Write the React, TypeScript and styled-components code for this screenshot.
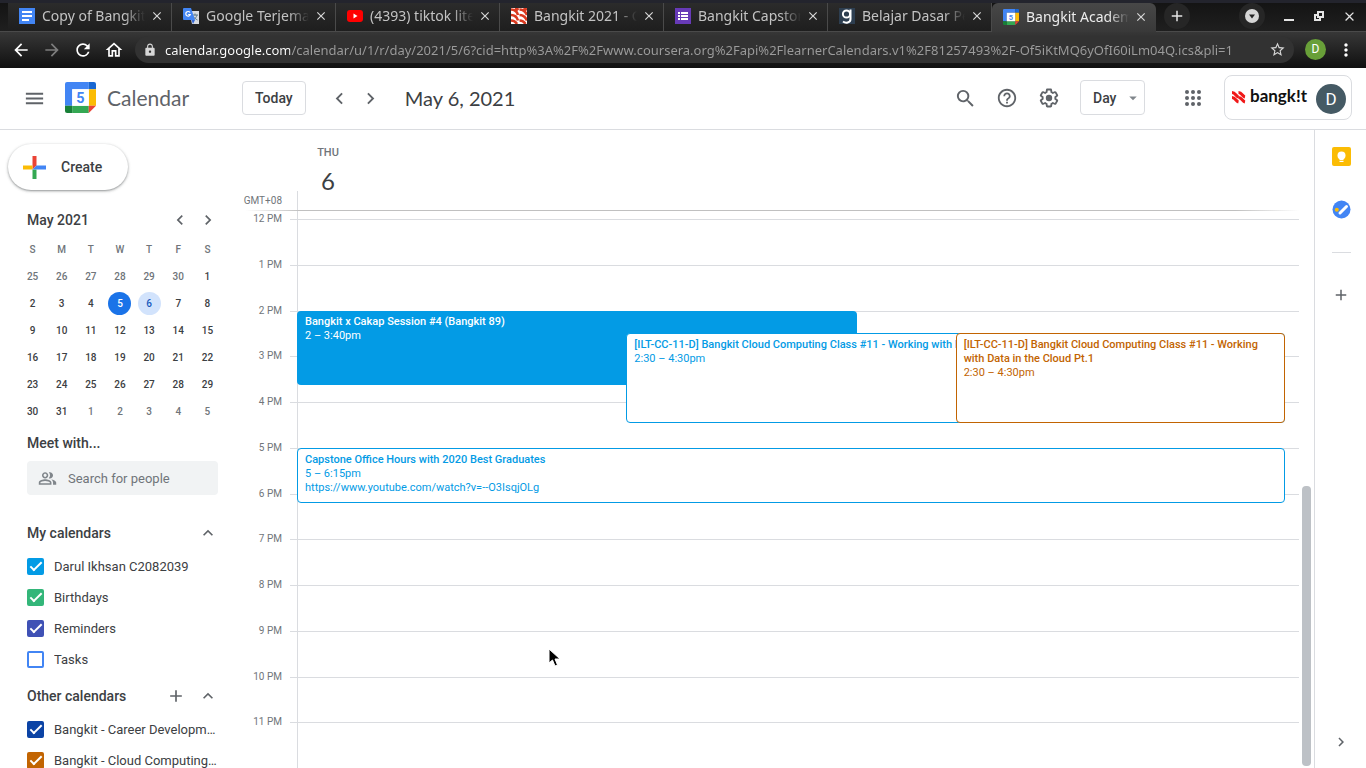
import React from 'react';
import styled, { createGlobalStyle, css } from 'styled-components';
import {
  MdAdd,
  MdArrowBack,
  MdArrowForward,
  MdArrowDropDown,
  MdChevronLeft,
  MdChevronRight,
  MdClose,
  MdExpandLess,
  MdHelpOutline,
  MdLock,
  MdMenu,
  MdMoreVert,
  MdOutlineHome,
  MdOutlinePeopleAlt,
  MdRefresh,
  MdSearch,
  MdStarBorder,
} from 'react-icons/md';

const chromeFont = '"Noto Sans", sans-serif';
const brandFont = 'Lato, Roboto, sans-serif';
const textFont = 'Roboto, "Liberation Sans", sans-serif';

const GlobalStyle = createGlobalStyle`
  *, *::before, *::after { box-sizing: border-box; }
  body { margin: 0; background: #fff; color: #3c4043; font-family: ${textFont}; }
  button, input, select { font: inherit; color: inherit; }
  button { border: 0; padding: 0; background: none; cursor: pointer; }
  svg { display: block; flex: none; }
`;

const Window = styled.div`
  display: flex;
  flex-direction: column;
  height: 100vh;
  overflow: hidden;
`;

/* ---------- browser chrome ---------- */

const TabStrip = styled.div`
  display: flex;
  align-items: flex-end;
  height: 32px;
  padding: 3px 5px 0 8px;
  background: linear-gradient(#23242d 0 3px, #141414 3px, #1f1f1f);
  border-bottom: 1px solid #4a4a4a;
  font-family: ${chromeFont};
`;

const Tab = styled.div<{ $active?: boolean }>`
  display: flex;
  align-items: center;
  flex: 0 1 164px;
  min-width: 0;
  height: 28px;
  padding: 0 8px 2px 11px;
  color: #c3c3c3;
  background: linear-gradient(#2b2b2b, #1e1e1e);
  box-shadow: inset -2px 0 0 -1px #4a4a4a;
  ${(p) =>
    p.$active &&
    css`
      height: 29px;
      margin-bottom: -1px;
      color: #ececec;
      background: linear-gradient(#474747, #393939);
      border-radius: 6px 6px 0 0;
      box-shadow: none;
    `}
`;

const TabTitle = styled.span`
  flex: 1;
  min-width: 0;
  margin: 0 5px 0 7px;
  overflow: hidden;
  white-space: nowrap;
  font-size: 14px;
  line-height: 20px;
  mask-image: linear-gradient(90deg, #000 80%, transparent);
`;

const TabClose = styled.button`
  color: #d8d8d8;
`;

const RoundButton = styled.button`
  display: grid;
  place-items: center;
  width: 26px;
  height: 26px;
  border-radius: 50%;
  background: #262626;
  color: #e4e4e4;
`;

const NewTab = styled(RoundButton)`
  margin: 0 auto 2px 8px;
`;

const TabSearch = styled(RoundButton)`
  margin-right: 6px;
`;

const WindowControls = styled.div`
  display: flex;
  align-items: center;
  gap: 6px;
  height: 30px;
  color: #e4e4e4;
`;

const WindowButton = styled.button`
  display: grid;
  place-items: center;
  width: 24px;
  height: 24px;
`;

const AddressBar = styled.div`
  display: flex;
  align-items: center;
  height: 36px;
  padding: 0 10px 1px 11px;
  background: linear-gradient(#373737, #101010);
  color: #fff;
  font-family: ${chromeFont};
`;

const NavButton = styled.button`
  display: grid;
  place-items: center;
  width: 20px;
  height: 20px;
  margin-right: 11px;
  color: #fff;

  &:disabled { color: #7d7d7d; }
`;

const UrlField = styled.label`
  display: flex;
  align-items: center;
  flex: 1;
  min-width: 0;
  height: 27px;
  margin-right: 11px;
  padding: 0 8px;
  gap: 8px;
  border-radius: 14px;
  background: #323232;
  color: #d6d6d6;
`;

const UrlInput = styled.input`
  flex: 1;
  min-width: 0;
  height: 22px;
  padding: 0;
  border: 0;
  outline: 0;
  color: #9c9c9c;
  background: linear-gradient(90deg, #fff 125px, #9c9c9c 125px);
  background-clip: text;
  -webkit-text-fill-color: transparent;
  font-size: 13px;
`;

const ChromeAvatar = styled.button`
  width: 21px;
  height: 21px;
  margin-right: 10px;
  border-radius: 50%;
  background: #689f38;
  color: #fff;
  font: 12px/21px ${textFont};
`;

/* ---------- calendar header ---------- */

const Header = styled.header`
  display: flex;
  align-items: center;
  height: 62px;
  flex: none;
  padding: 0 14px 2px 23px;
  border-bottom: 1px solid #dadce0;
  color: #5f6368;
`;

const IconButton = styled.button`
  display: grid;
  place-items: center;
  flex: none;
  width: 22px;
  height: 22px;
  color: #5f6368;
`;

const Brand = styled.a`
  display: flex;
  align-items: center;
  gap: 11px;
  width: 177px;
  margin-left: 20px;
  color: #5f6368;
  text-decoration: none;
  font: 21px/28px ${brandFont};
`;

const OutlinedButton = styled.button`
  height: 34px;
  padding: 0 12px;
  border: 1px solid #dadce0;
  border-radius: 4px;
  color: #3c4043;
  font: 500 14px/20px ${textFont};
`;

const Pager = styled.div`
  display: flex;
  gap: 9px;
  margin: 0 24px 0 22px;
`;

const PageTitle = styled.h1`
  margin: 0 auto 0 0;
  color: #3c4043;
  font: 20px/28px ${brandFont};
`;

const HeaderTools = styled.div`
  display: flex;
  align-items: center;
  gap: 20px;
`;

const ViewPicker = styled.label`
  display: flex;
  align-items: center;
  position: relative;
  color: #80868b;

  svg { position: absolute; right: 3px; pointer-events: none; }
`;

const ViewSelect = styled.select`
  appearance: none;
  width: 65px;
  height: 35px;
  padding: 0 12px;
  border: 1px solid #dadce0;
  border-radius: 4px;
  background: #fff;
  color: #3c4043;
  font: 500 14px/20px ${textFont};
`;

const AppsButton = styled(IconButton)`
  margin-left: 17px;
`;

const Account = styled.button`
  display: flex;
  align-items: center;
  justify-content: space-between;
  width: 128px;
  height: 45px;
  padding: 2px 5px 0 7px;
  border: 1px solid #dadce0;
  border-radius: 8px;
`;

const Avatar = styled.span`
  width: 30px;
  height: 30px;
  border-radius: 50%;
  background: #455a64;
  color: #fff;
  font: 17px/31px ${textFont};
  text-align: center;
`;

/* ---------- sidebar ---------- */

const Body = styled.div`
  display: flex;
  flex: 1;
  min-height: 0;
`;

const Sidebar = styled.aside`
  flex: none;
  width: 240px;
  padding: 14px 0 0 8px;
  overflow: hidden;
`;

const CreateButton = styled.button`
  display: flex;
  align-items: center;
  gap: 15px;
  width: 120px;
  height: 46px;
  padding-left: 15px;
  border-radius: 23px;
  background: #fff;
  box-shadow: 0 1px 2px rgba(60, 64, 67, 0.45), 0 1px 3px 1px rgba(60, 64, 67, 0.12);
  font: 500 14px/20px ${textFont};
`;

const SectionHead = styled.div<{ $top: number; $gap?: number }>`
  display: flex;
  align-items: center;
  gap: ${(p) => p.$gap ?? 8}px;
  height: 20px;
  width: 210px;
  margin-top: ${(p) => p.$top}px;
  padding-left: 19px;
`;

const SectionTitle = styled.h2`
  margin: 0 auto 0 0;
  font: 500 14px/20px ${textFont};
`;

const SectionButton = styled(IconButton)`
  width: 20px;
  height: 20px;
`;

const MonthTable = styled.table`
  width: 204px;
  margin: 6px 0 0 10px;
  border-collapse: collapse;
  table-layout: fixed;
  text-align: center;
  font-size: 10px;

  th, td { height: 27px; padding: 0; font-weight: 500; }
  th { color: #70757a; }
`;

const DayButton = styled.button<{ $tone: 'in' | 'out' | 'today' | 'picked' }>`
  display: block;
  width: 23px;
  height: 23px;
  margin: 0 auto;
  border-radius: 50%;
  font: 500 10px/23px ${textFont};
  color: ${(p) => ({ in: '#3c4043', out: '#70757a', today: '#fff', picked: '#185abc' })[p.$tone]};
  background: ${(p) => ({ in: 'none', out: 'none', today: '#1a73e8', picked: '#d2e3fc' })[p.$tone]};
`;

const PeopleSearch = styled.label`
  display: flex;
  align-items: center;
  gap: 11px;
  width: 191px;
  height: 34px;
  margin: 8px 0 0 19px;
  padding-left: 11px;
  border-radius: 4px;
  background: #f1f3f4;
  color: #80868b;

  input {
    width: 130px;
    padding: 0;
    border: 0;
    outline: 0;
    background: none;
    font-size: 13px;
  }
  input::placeholder { color: #70757a; opacity: 1; }
`;

const CalendarList = styled.ul`
  margin: 8px 0 0;
  padding: 0 0 0 19px;
  list-style: none;
`;

const CalendarItem = styled.label`
  display: flex;
  align-items: center;
  gap: 10px;
  height: 31px;
  width: 192px;
  font-size: 13px;

  span { overflow: hidden; text-overflow: ellipsis; white-space: nowrap; }
`;

const CheckBox = styled.input<{ $color: string }>`
  appearance: none;
  display: grid;
  place-items: center;
  flex: none;
  width: 17px;
  height: 17px;
  margin: 0;
  border: 2px solid ${(p) => p.$color};
  border-radius: 2px;

  &:checked { background: ${(p) => p.$color}; }
  &:checked::after {
    content: '';
    width: 12px;
    height: 6px;
    margin-bottom: 3px;
    border: solid #fff;
    border-width: 0 0 2px 2px;
    transform: rotate(-45deg);
  }
`;

/* ---------- day view ---------- */

const DayView = styled.main`
  display: grid;
  grid-template-columns: 57px 1fr;
  grid-template-rows: 61px 20px minmax(0, 1fr);
  flex: 1;
  min-width: 0;
`;

const DayHeading = styled.div`
  grid-area: 1 / 2;
  width: 62px;
  padding-top: 15px;
  color: #70757a;
  font: 500 11px/16px ${textFont};
  text-align: center;
`;

const DayNumber = styled.div`
  margin-top: 6px;
  color: #3c4043;
  font: 24px/28px ${brandFont};
`;

const ZoneLabel = styled.div`
  grid-area: 2 / 1;
  padding-right: 15px;
  color: #70757a;
  font-size: 10px;
  line-height: 20px;
  text-align: right;
`;

const ZoneRule = styled.div`
  grid-area: 2 / 2;
  border-left: 1px solid #dadce0;
`;

const HeadRule = styled.div`
  grid-area: 2 / 1 / 3 / 3;
  align-self: end;
  height: 1px;
  background: linear-gradient(90deg, transparent 5px, #c0c0c0 60px, #c0c0c0 94%, transparent);
`;

const Hours = styled.ol`
  grid-area: 3 / 1;
  display: grid;
  grid-template-rows: repeat(12, minmax(0, 1fr));
  margin: 8px 0 0;
  padding: 0;
  list-style: none;
  color: #70757a;
  font-size: 10px;
  text-align: right;
`;

const Hour = styled.li`
  padding-right: 15px;
  background: linear-gradient(#dadce0, #dadce0) right top / 7px 1px no-repeat;

  time { display: block; margin-top: -7px; line-height: 14px; }
`;

const Column = styled.div`
  grid-area: 3 / 2;
  border-left: 1px solid #dadce0;
  padding-top: 8px;
`;

const Canvas = styled.div`
  display: grid;
  grid-template-rows: repeat(12, minmax(0, 1fr));
  position: relative;
  height: 100%;
`;

const Slot = styled.div`
  border-top: 1px solid #dadce0;
`;

const Events = styled.div`
  position: absolute;
  inset: 0 14px 0 -1px;
`;

const EventCard = styled.button<{
  $start: number;
  $end: number;
  $left: number;
  $width: number;
  $color: string;
  $filled?: boolean;
}>`
  position: absolute;
  display: flex;
  flex-direction: column;
  top: calc(100% * ${(p) => p.$start} / 12);
  height: calc(100% * ${(p) => p.$end - p.$start} / 12 - 2px);
  left: calc(100% * ${(p) => p.$left} / 60);
  width: calc(100% * ${(p) => p.$width} / 60);
  padding: ${(p) => (p.$filled ? '4px 8px' : '4px 7px')};
  border: ${(p) => (p.$filled ? '0' : `1px solid ${p.$color}`)};
  border-radius: 4px;
  overflow: hidden;
  background: ${(p) => (p.$filled ? p.$color : '#fff')};
  color: ${(p) => (p.$filled ? '#fff' : p.$color)};
  font: 11px/14px ${textFont};
  text-align: left;

  strong { font-weight: 500; }
`;

const ScrollTrack = styled.div`
  display: flex;
  flex: none;
  flex-direction: column;
  justify-content: flex-end;
  width: 15px;
  padding: 0 3px 2px;
`;

const ScrollThumb = styled.div`
  height: 44%;
  border-radius: 4px;
  background: #bdc1c6;
`;

const Rail = styled.aside`
  display: flex;
  flex: none;
  flex-direction: column;
  align-items: center;
  width: 52px;
  padding: 15px 0 15px 1px;
  border-left: 1px solid #dadce0;
`;

const RailRule = styled.hr`
  width: 19px;
  height: 1px;
  margin: 32px 0 31px;
  border: 0;
  background: #dadce0;
`;

const RailButton = styled(IconButton)`
  margin-bottom: 31px;

  &:last-child { margin: auto 0 0; }
`;

const Pointer = styled.svg`
  position: absolute;
  left: 548px;
  top: 648px;
  pointer-events: none;
`;

/* ---------- drawings ---------- */

const CalendarLogo = ({ size }: { size: number }) => (
  <svg width={size} height={size} viewBox="0 0 30 30" aria-hidden="true">
    <path d="M2 0h21v7H7v16H0V2a2 2 0 0 1 2-2z" fill="#4285f4" />
    <path d="M23 0h5a2 2 0 0 1 2 2v5h-7z" fill="#1967d2" />
    <path d="M23 7h7v16h-7z" fill="#fbbc04" />
    <path d="M7 23h16v7H7z" fill="#34a853" />
    <path d="M0 23h7v7H2a2 2 0 0 1-2-2z" fill="#188038" />
    <path d="M23 23h7l-7 7z" fill="#ea4335" />
    <path d="M7 7h16v16H7z" fill="#fff" />
    <text x="15" y="20" textAnchor="middle" fontFamily="Roboto" fontWeight="700" fontSize="14" fill="#4285f4">5</text>
  </svg>
);

const DocsIcon = () => (
  <svg width="16" height="16" viewBox="0 0 16 16">
    <path d="M0 0h16v16H0z" fill="#4285f4" />
    <path d="M3 3h10v2H3zM3 7h10v2H3zM3 11h7v2H3z" fill="#fff" />
  </svg>
);

const TranslateIcon = () => (
  <svg width="16" height="16" viewBox="0 0 16 16">
    <path d="M6 3h10v13H9z" fill="#d8dbe0" />
    <path d="M9 7h6M12 5.500v2M14 7c-.5 2-2 4-4 5M10.500 8.500c1 1.500 2 2.500 4 3.500" fill="none" stroke="#607d8b" />
    <path d="M1 0h7l4 12H1a1 1 0 0 1-1-1V1a1 1 0 0 1 1-1z" fill="#4285f4" />
    <path d="M8.500 12H12l-2 4z" fill="#3367d6" />
    <path d="M7 4.500A2.300 2.300 0 1 0 7.300 6.500H5.200" fill="none" stroke="#fff" strokeWidth="1.200" />
  </svg>
);

const YoutubeIcon = () => (
  <svg width="16" height="16" viewBox="0 0 16 16">
    <rect y="2" width="16" height="12" rx="3" fill="#f00" />
    <path d="M6.500 5.500v5l4-2.500z" fill="#fff" />
  </svg>
);

const BangkitIcon = () => (
  <svg width="16" height="16" viewBox="0 0 16 16">
    <path d="M0 0h16v16H0z" fill="#fff" />
    <path
      d="M0 1.500c4.500 0 6 2 7 5.500M0 7c4.500 0 6 2 7 5.500M0 12.500c3 0 4.500 1 6 3.500M4 0c1.500.5 2.500 1 3.500 2M8.500 1.500c4.500 0 6 2 7.500 5.500M8.500 7c4.500 0 6 2 7.500 5.500M8.500 12.500c3 0 4.500 1 6 3.500M12.500 0c1.500.5 2.500 1 3.500 2"
      fill="none"
      stroke="#d93a20"
      strokeWidth="2.600"
    />
  </svg>
);

const FormsIcon = () => (
  <svg width="16" height="16" viewBox="0 0 16 16">
    <path d="M0 0h16v16H0z" fill="#673ab7" />
    <path d="M3 4h2v2H3zM6 4h7v2H6zM3 7h2v2H3zM6 7h7v2H6zM3 10h2v2H3zM6 10h7v2H6z" fill="#fff" />
  </svg>
);

const DicodingIcon = () => (
  <svg width="16" height="16" viewBox="0 0 16 16">
    <path d="M0 0h16v16H0z" fill="#2d3e50" />
    <circle cx="7.500" cy="6" r="3.600" fill="none" stroke="#fff" strokeWidth="2" />
    <path d="M11.500 1.500V11c0 4-5 4.500-7.500 2.500" fill="none" stroke="#fff" strokeWidth="2" />
  </svg>
);

const CreatePlus = () => (
  <svg width="23" height="23" viewBox="0 0 23 23">
    <path d="M9.500 0h4v9.500l-4 4z" fill="#ea4335" />
    <path d="M0 9.500h9.500v4H0z" fill="#fbbc04" />
    <path d="M9.500 13.500h4V23h-4z" fill="#34a853" />
    <path d="M13.500 9.500H23v4H9.500z" fill="#4285f4" />
  </svg>
);

const GearIcon = () => (
  <svg width="22" height="22" viewBox="0 0 24 24" fill="currentColor">
    <path d="M13.850 22.250h-3.700c-.74 0-1.360-.54-1.450-1.270l-.27-1.890c-.27-.14-.53-.29-.79-.46l-1.800.72c-.7.26-1.470-.03-1.810-.65L2.200 15.530c-.35-.66-.2-1.440.36-1.880l1.530-1.190c-.01-.15-.02-.3-.02-.46 0-.15.01-.31.02-.46l-1.520-1.190c-.59-.45-.74-1.260-.37-1.880l1.850-3.190c.34-.62 1.110-.9 1.790-.63l1.810.73c.26-.17.52-.32.78-.46l.27-1.910c.09-.7.71-1.250 1.440-1.250h3.700c.74 0 1.360.54 1.450 1.270l.27 1.890c.27.14.53.29.79.46l1.800-.72c.71-.26 1.480.03 1.820.65l1.840 3.180c.36.66.2 1.440-.36 1.880l-1.520 1.190c.01.15.02.3.02.46s-.01.31-.02.46l1.520 1.190c.56.45.72 1.230.37 1.860l-1.860 3.220c-.34.62-1.110.9-1.800.63l-1.800-.72c-.26.17-.52.32-.78.46l-.27 1.910c-.1.68-.72 1.220-1.460 1.220zm-3.230-2h2.760l.37-2.550.53-.22c.44-.18.88-.44 1.340-.78l.45-.34 2.380.96 1.380-2.400-2.030-1.580.07-.56c.03-.26.06-.51.06-.78s-.03-.53-.06-.78l-.07-.56 2.030-1.580-1.390-2.400-2.390.96-.45-.35c-.42-.32-.87-.58-1.330-.77l-.52-.22-.37-2.550h-2.760l-.37 2.550-.53.21c-.44.19-.88.44-1.340.79l-.45.33-2.380-.95-1.390 2.390 2.030 1.580-.07.56a7 7 0 0 0-.06.79c0 .26.02.53.06.78l.07.56-2.030 1.580 1.380 2.400 2.390-.96.45.35c.43.33.86.58 1.330.77l.53.22.38 2.550z" />
    <circle cx="12" cy="12" r="3.500" />
  </svg>
);

const AppsIcon = () => (
  <svg width="16" height="16" viewBox="0 0 16 16" fill="currentColor">
    {[2, 8, 14].flatMap((y) => [2, 8, 14].map((x) => <circle key={`${x}-${y}`} cx={x} cy={y} r="2" />))}
  </svg>
);

const BangkitLogo = () => (
  <svg width="76" height="24" viewBox="0 0 76 24" role="img" aria-label="Bangkit">
    <g fill="none" stroke="#f01818" strokeWidth="3">
      <path d="M0 5.500c3.500 0 4 4 6.500 4.500M0 10.500c3.500 0 4 4 6.500 4.500M6.500 5.500c3.500 0 4 4 6.500 4.500M6.500 10.500c3.500 0 4 4 6.500 4.500" />
    </g>
    <text x="18" y="15" fontFamily="Lato" fontWeight="700" fontSize="17" fill="#111">bangk!t</text>
  </svg>
);

const KeepIcon = () => (
  <svg width="19" height="19" viewBox="0 0 19 19">
    <rect width="19" height="19" rx="2" fill="#fbbc04" />
    <circle cx="9.500" cy="8.500" r="4" fill="#fff" />
    <path d="M7.500 11h4v2h-4zM7.500 13.800h4V15h-4z" fill="#fff" />
  </svg>
);

const TasksIcon = () => (
  <svg width="19" height="19" viewBox="0 0 19 19">
    <circle cx="9.500" cy="9.500" r="9" fill="#4285f4" />
    <circle cx="4.800" cy="9.800" r="2" fill="#fbbc04" />
    <path d="M8 13l6.500-6.500" stroke="#fff" strokeWidth="3" strokeLinecap="round" />
  </svg>
);

/* ---------- content ---------- */

const tabs = [
  { title: 'Copy of Bangkit', icon: <DocsIcon /> },
  { title: 'Google Terjemahan', icon: <TranslateIcon /> },
  { title: '(4393) tiktok lite', icon: <YoutubeIcon /> },
  { title: 'Bangkit 2021 - Cloud', icon: <BangkitIcon /> },
  { title: 'Bangkit Capstone', icon: <FormsIcon /> },
  { title: 'Belajar Dasar Pemrograman', icon: <DicodingIcon /> },
  { title: 'Bangkit Academy', icon: <CalendarLogo size={16} />, active: true },
];

const weeks = [
  [25, 26, 27, 28, 29, 30, 1],
  [2, 3, 4, 5, 6, 7, 8],
  [9, 10, 11, 12, 13, 14, 15],
  [16, 17, 18, 19, 20, 21, 22],
  [23, 24, 25, 26, 27, 28, 29],
  [30, 31, 1, 2, 3, 4, 5],
];

const toneOf = (week: number, day: number) => {
  if ((week === 0 && day > 20) || (week === 5 && day < 20)) return 'out';
  if (week === 1 && day === 5) return 'today';
  if (week === 1 && day === 6) return 'picked';
  return 'in';
};

const myCalendars = [
  { name: 'Darul Ikhsan C2082039', color: '#039be5', on: true },
  { name: 'Birthdays', color: '#33b679', on: true },
  { name: 'Reminders', color: '#3f51b5', on: true },
  { name: 'Tasks', color: '#4285f4', on: false },
];

const otherCalendars = [
  { name: 'Bangkit - Career Development', color: '#0b43a5', on: true },
  { name: 'Bangkit - Cloud Computing Class', color: '#c26401', on: true },
];

const hours = ['12 PM', ...Array.from({ length: 11 }, (_, i) => `${i + 1} PM`)];

const events = [
  { title: 'Bangkit x Cakap Session #4 (Bangkit 89)', time: '2 – 3:40pm', start: 2, end: 3.67, left: 0, width: 34, color: '#039be5', filled: true },
  { title: '[ILT-CC-11-D] Bangkit Cloud Computing Class #11 - Working with Data in the Cloud Pt.1', time: '2:30 – 4:30pm', start: 2.5, end: 4.5, left: 20, width: 40, color: '#039be5' },
  { title: '[ILT-CC-11-D] Bangkit Cloud Computing Class #11 - Working with Data in the Cloud Pt.1', time: '2:30 – 4:30pm', start: 2.5, end: 4.5, left: 40, width: 20, color: '#c26401' },
  { title: 'Capstone Office Hours with 2020 Best Graduates', time: '5 – 6:15pm', place: 'https://www.youtube.com/watch?v=--O3IsqjOLg', start: 5, end: 6.25, left: 0, width: 60, color: '#039be5' },
];

const CalendarGroup = ({ items }: { items: typeof myCalendars }) => (
  <CalendarList>
    {items.map((c) => (
      <li key={c.name}>
        <CalendarItem>
          <CheckBox type="checkbox" defaultChecked={c.on} $color={c.color} />
          <span>{c.name}</span>
        </CalendarItem>
      </li>
    ))}
  </CalendarList>
);

export default function App() {
  return (
    <Window>
      <GlobalStyle />
      <TabStrip>
        {tabs.map((t) => (
          <Tab key={t.title} $active={t.active}>
            {t.icon}
            <TabTitle>{t.title}</TabTitle>
            <TabClose aria-label="Close tab"><MdClose size={14} /></TabClose>
          </Tab>
        ))}
        <NewTab aria-label="New tab"><MdAdd size={18} /></NewTab>
        <WindowControls>
          <TabSearch aria-label="Search tabs">
            <svg width="14" height="14" viewBox="0 0 14 14">
              <circle cx="7" cy="7" r="7" fill="#d6d6d6" />
              <path d="M4 5.500h6L7 9.500z" fill="#222" />
            </svg>
          </TabSearch>
          <WindowButton aria-label="Minimize">
            <svg width="10" height="10"><path d="M0 8h10v2H0z" fill="currentColor" /></svg>
          </WindowButton>
          <WindowButton aria-label="Restore">
            <svg width="10" height="10" fill="none" stroke="currentColor" strokeWidth="2">
              <path d="M4 1h5v5H4zM3 4H1v5h5V7" />
            </svg>
          </WindowButton>
          <WindowButton aria-label="Close"><MdClose size={15} /></WindowButton>
        </WindowControls>
      </TabStrip>

      <AddressBar>
        <NavButton aria-label="Back"><MdArrowBack size={20} /></NavButton>
        <NavButton aria-label="Forward" disabled><MdArrowForward size={20} /></NavButton>
        <NavButton aria-label="Reload"><MdRefresh size={20} /></NavButton>
        <NavButton aria-label="Home"><MdOutlineHome size={20} /></NavButton>
        <UrlField>
          <MdLock size={14} />
          <UrlInput
            aria-label="Address"
            defaultValue="calendar.google.com/calendar/u/1/r/day/2021/5/6?cid=http%3A%2F%2Fwww.coursera.org%2Fapi%2FlearnerCalendars.v1%2F81257493%2F-Of5iKtMQ6yOfI60iLm04Q.ics&pli=1"
          />
          <MdStarBorder size={17} />
        </UrlField>
        <ChromeAvatar aria-label="Profile">D</ChromeAvatar>
        <button aria-label="Menu"><MdMoreVert size={20} /></button>
      </AddressBar>

      <Header>
        <IconButton aria-label="Main menu"><MdMenu size={23} /></IconButton>
        <Brand href="#">
          <CalendarLogo size={31} />
          Calendar
        </Brand>
        <OutlinedButton>Today</OutlinedButton>
        <Pager>
          <IconButton aria-label="Previous day"><MdChevronLeft size={23} /></IconButton>
          <IconButton aria-label="Next day"><MdChevronRight size={23} /></IconButton>
        </Pager>
        <PageTitle>May 6, 2021</PageTitle>
        <HeaderTools>
          <IconButton aria-label="Search"><MdSearch size={23} /></IconButton>
          <IconButton aria-label="Help"><MdHelpOutline size={22} /></IconButton>
          <IconButton aria-label="Settings"><GearIcon /></IconButton>
          <ViewPicker>
            <ViewSelect aria-label="View" defaultValue="Day">
              <option>Day</option>
              <option>Week</option>
              <option>Month</option>
            </ViewSelect>
            <MdArrowDropDown size={18} />
          </ViewPicker>
          <AppsButton aria-label="Google apps"><AppsIcon /></AppsButton>
          <Account aria-label="Account">
            <BangkitLogo />
            <Avatar>D</Avatar>
          </Account>
        </HeaderTools>
      </Header>

      <Body>
        <Sidebar>
          <CreateButton><CreatePlus />Create</CreateButton>
          <SectionHead $top={20}>
            <SectionTitle>May 2021</SectionTitle>
            <SectionButton aria-label="Previous month"><MdChevronLeft size={20} /></SectionButton>
            <SectionButton aria-label="Next month"><MdChevronRight size={20} /></SectionButton>
          </SectionHead>
          <MonthTable>
            <thead>
              <tr>{['S', 'M', 'T', 'W', 'T', 'F', 'S'].map((d, i) => <th key={i} scope="col">{d}</th>)}</tr>
            </thead>
            <tbody>
              {weeks.map((week, w) => (
                <tr key={w}>
                  {week.map((d) => <td key={d}><DayButton $tone={toneOf(w, d)}>{d}</DayButton></td>)}
                </tr>
              ))}
            </tbody>
          </MonthTable>
          <SectionHead $top={8}><SectionTitle>Meet with...</SectionTitle></SectionHead>
          <PeopleSearch>
            <MdOutlinePeopleAlt size={19} />
            <input type="text" aria-label="Search for people" placeholder="Search for people" />
          </PeopleSearch>
          <SectionHead $top={28}>
            <SectionTitle>My calendars</SectionTitle>
            <SectionButton aria-label="Collapse my calendars"><MdExpandLess size={20} /></SectionButton>
          </SectionHead>
          <CalendarGroup items={myCalendars} />
          <SectionHead $top={11} $gap={12}>
            <SectionTitle>Other calendars</SectionTitle>
            <SectionButton aria-label="Add calendar"><MdAdd size={20} /></SectionButton>
            <SectionButton aria-label="Collapse other calendars"><MdExpandLess size={20} /></SectionButton>
          </SectionHead>
          <CalendarGroup items={otherCalendars} />
        </Sidebar>

        <DayView>
          <DayHeading>
            THU
            <DayNumber>6</DayNumber>
          </DayHeading>
          <ZoneLabel>GMT+08</ZoneLabel>
          <ZoneRule />
          <HeadRule />
          <Hours>
            {hours.map((h) => <Hour key={h}><time>{h}</time></Hour>)}
          </Hours>
          <Column>
            <Canvas>
              {hours.map((h) => <Slot key={h} />)}
              <Events>
                {events.map((e, i) => (
                  <EventCard key={i} $start={e.start} $end={e.end} $left={e.left} $width={e.width} $color={e.color} $filled={e.filled}>
                    <strong>{e.title}</strong>
                    <span>{e.time}</span>
                    {e.place && <span>{e.place}</span>}
                  </EventCard>
                ))}
              </Events>
            </Canvas>
          </Column>
        </DayView>
        <ScrollTrack><ScrollThumb /></ScrollTrack>

        <Rail>
          <RailButton aria-label="Keep"><KeepIcon /></RailButton>
          <IconButton aria-label="Tasks"><TasksIcon /></IconButton>
          <RailRule />
          <IconButton aria-label="Get add-ons"><MdAdd size={18} /></IconButton>
          <RailButton aria-label="Hide side panel"><MdChevronRight size={18} /></RailButton>
        </Rail>
      </Body>

      <Pointer width="13" height="20" viewBox="0 0 13 20">
        <path d="M1 1v14l3.500-3 2.500 6 2.500-1-2.500-6H12z" fill="#000" stroke="#fff" strokeWidth="1" />
      </Pointer>
    </Window>
  );
}
